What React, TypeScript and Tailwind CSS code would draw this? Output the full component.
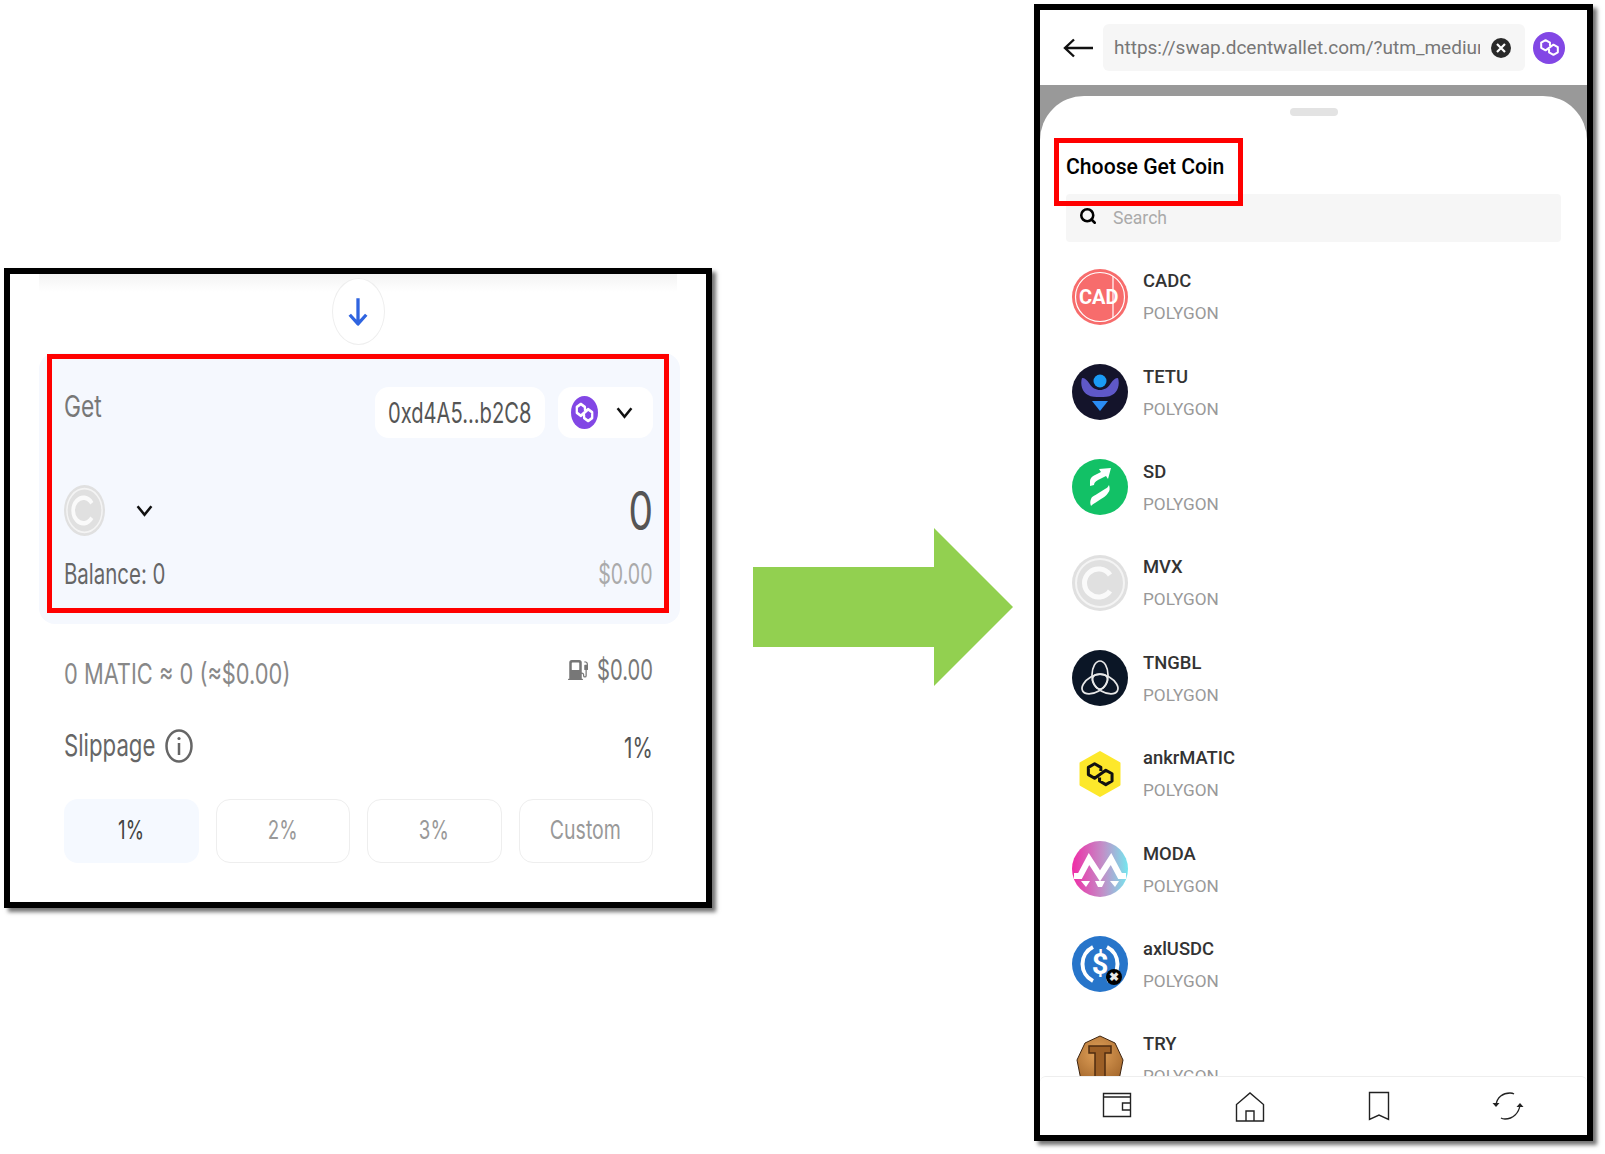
import React from 'react';
import { Search } from 'lucide-react';
import { BsFuelPumpFill } from 'react-icons/bs';

const POLYGON_PATH = 'M12.4 10V7.75L8.5 5.5 4.6 7.75v4.5l3.9 2.25 7-5 3.9 2.25v4.5l-3.9 2.25-3.9-2.25V14';

const PolygonMark: React.FC<{ color: string; width?: number; className?: string }> = ({ color, width = 2, className }) => (
  <svg viewBox="0 0 24 24" className={className} fill="none" preserveAspectRatio="none">
    <path d={POLYGON_PATH} stroke={color} strokeWidth={width} strokeLinejoin="round" strokeLinecap="round" />
  </svg>
);

const Chevron: React.FC = () => (
  <svg viewBox="0 0 16 12" className="w-[17px] h-[13px]" fill="none">
    <path d="M1.5 2l6.5 8 6.5-8" stroke="#111" strokeWidth="2.4" />
  </svg>
);

const CoinCopy: React.FC<{ className?: string }> = ({ className }) => (
  <svg viewBox="0 0 56 56" className={className} preserveAspectRatio="none">
    <circle cx="28" cy="28" r="28" fill="#e0e0e0" />
    <circle cx="28" cy="28" r="24" fill="none" stroke="#f4f4f4" strokeWidth="2" />
    <path d="M38 20a14 14 0 1 0 0 16" fill="none" stroke="#fafafa" strokeWidth="5" />
  </svg>
);

const CadcIcon = () => (
  <svg viewBox="0 0 56 56" className="w-[56px] h-[56px]">
    <circle cx="28" cy="28" r="28" fill="#f76c6c" />
    <circle cx="28" cy="28" r="24.5" fill="none" stroke="#fff" strokeWidth="1.2" />
    <path d="M41 7v42" stroke="#fff" strokeWidth="1.2" />
    <text x="7" y="35" fill="#fff" fontSize="20" fontWeight="700" fontFamily="Roboto, sans-serif">CAD</text>
  </svg>
);

const TetuIcon = () => (
  <svg viewBox="0 0 56 56" className="w-[56px] h-[56px]">
    <circle cx="28" cy="28" r="28" fill="#14142b" />
    <path d="M10 14c3 0 5 2 7 5 3 5 7 7 11 7s8-2 11-7c2-3 4-5 7-5 2 6 0 14-6 17-3 2-8 2-12 2s-9 0-12-2c-6-3-8-11-6-17z" fill="#5f58c8" />
    <circle cx="28" cy="17" r="6.5" fill="#1a9af5" />
    <path d="M20 37h16l-8 10z" fill="#2b8df5" />
  </svg>
);

const SdIcon = () => (
  <svg viewBox="0 0 56 56" className="w-[56px] h-[56px]">
    <circle cx="28" cy="28" r="28" fill="#12c166" />
    <path d="M18 23c0-3 1-5 5-7l6-3-2-3 12-1-3 11-2-3-8 4c-3 2-4 3-4 5l-4 1c0 0 0-2 0-4z" fill="#fff" />
    <path d="M19 47c-1-2-1-5 0-7 1-3 3-3 6-5l8-5c2-1 3-2 4-4 1 3 1 6-1 8-2 3-4 4-7 6l-6 4c-2 1-3 2-4 3z" fill="#fff" />
  </svg>
);

const TngblIcon = () => (
  <svg viewBox="0 0 56 56" className="w-[56px] h-[56px]">
    <circle cx="28" cy="28" r="28" fill="#0b1626" />
    <g fill="none" stroke="#e8e8e8" strokeWidth="1.7">
      <ellipse cx="28" cy="25" rx="8" ry="14" />
      <ellipse cx="28" cy="25" rx="8" ry="14" transform="rotate(120 28 31)" />
      <ellipse cx="28" cy="25" rx="8" ry="14" transform="rotate(240 28 31)" />
    </g>
  </svg>
);

const AnkrIcon = () => (
  <svg viewBox="0 0 56 56" className="w-[56px] h-[56px]">
    <path d="M28 6l19.5 11.2v21.6L28 50 8.5 38.8V17.2z" fill="#fde82b" stroke="#fde82b" strokeWidth="2" strokeLinejoin="round" />
    <g transform="translate(9 9) scale(1.6)">
      <path d={POLYGON_PATH} fill="none" stroke="#111" strokeWidth="1.9" strokeLinejoin="round" />
    </g>
  </svg>
);

const ModaIcon = () => (
  <svg viewBox="0 0 56 56" className="w-[56px] h-[56px]">
    <defs>
      <linearGradient id="modaFill" x1="0" y1="0" x2="1" y2="0">
        <stop offset="0" stopColor="#f02ca6" />
        <stop offset="0.55" stopColor="#c28fc8" />
        <stop offset="1" stopColor="#75e6ee" />
      </linearGradient>
    </defs>
    <circle cx="28" cy="28" r="28" fill="url(#modaFill)" />
    <path d="M2 35h6l9-17 11 17 11-17 9 17h6" fill="none" stroke="#fff" strokeWidth="6" strokeLinejoin="miter" />
    <path d="M9 40h9l-4 6zM23 40h10l-3 6h-4zM38 40h9l-4 6z" fill="#fff" />
  </svg>
);

const AxlIcon = () => (
  <div className="relative w-[56px] h-[56px]">
    <svg viewBox="0 0 56 56" className="w-[56px] h-[56px]">
      <circle cx="28" cy="28" r="28" fill="#2775ca" />
      <path d="M21 11a19 19 0 0 0 0 34M35 11a19 19 0 0 1 0 34" fill="none" stroke="#fff" strokeWidth="4" />
      <text x="28" y="38" textAnchor="middle" fill="#fff" fontSize="29" fontWeight="700" fontFamily="Roboto, sans-serif">$</text>
    </svg>
    <div className="absolute right-[6px] bottom-[7px] w-[16px] h-[16px] rounded-full bg-black flex items-center justify-center text-[#e8e8e8] text-[12px] leading-none font-bold">✖</div>
  </div>
);

const TryIcon = () => (
  <svg viewBox="0 0 56 56" className="w-[56px] h-[56px]">
    <defs>
      <radialGradient id="tryFill" cx="0.45" cy="0.4" r="0.7">
        <stop offset="0" stopColor="#e2a25a" />
        <stop offset="1" stopColor="#a5682c" />
      </radialGradient>
    </defs>
    <path d="M28 4l15 7 8 17-4 20H9L5 28l8-17z" fill="url(#tryFill)" stroke="#3d2410" strokeWidth="1" />
    <path d="M17 14h22v7h-6v27H23V21h-6z" fill="#9c5f26" stroke="#4f2d10" strokeWidth="1.5" />
  </svg>
);

const coins: { name: string; icon: React.ReactNode }[] = [
  { name: 'CADC', icon: <CadcIcon /> },
  { name: 'TETU', icon: <TetuIcon /> },
  { name: 'SD', icon: <SdIcon /> },
  { name: 'MVX', icon: <CoinCopy className="w-[56px] h-[56px]" /> },
  { name: 'TNGBL', icon: <TngblIcon /> },
  { name: 'ankrMATIC', icon: <AnkrIcon /> },
  { name: 'MODA', icon: <ModaIcon /> },
  { name: 'axlUSDC', icon: <AxlIcon /> },
  { name: 'TRY', icon: <TryIcon /> },
];

const SwapPanel: React.FC = () => (
  <div className="relative w-[708px] h-[640px] mt-[268px] ml-[4px] shrink-0 border-[6px] border-black bg-white shadow-[4px_4px_4px_rgba(0,0,0,0.55)] flex flex-col [font-family:Inter,sans-serif]">
    <div className="absolute top-0 left-[29px] right-[29px] h-[18px] bg-gradient-to-b from-[#f3f3f3] to-white" />
    <div className="relative mt-[4px] self-center w-[53px] h-[67px] rounded-[50%] border border-[#eeeeee] bg-white flex items-center justify-center shrink-0">
      <svg viewBox="0 0 24 34" className="w-[22px] h-[32px]" fill="none">
        <path d="M12 2v28M3 20l9 10 9-10" stroke="#2f64e0" strokeWidth="3.6" strokeLinejoin="round" />
      </svg>
    </div>

    <div className="relative mt-[8px] ml-[29px] mr-[26px] h-[271px] rounded-[16px] bg-[#f5f8fe] pt-[34px] pl-[25px] pr-[27px] shrink-0">
      <div className="absolute left-[8px] top-[1px] w-[622px] h-[259px] border-[5px] border-[#ff0000]" />
      <div className="flex justify-between items-start h-[51px]">
        <span className="mt-[1px] text-[30px] leading-[36px] text-[#777777] origin-left scale-x-[0.76]">Get</span>
        <div className="flex gap-[13px]">
          <div className="w-[170px] h-[51px] rounded-[14px] bg-white flex items-center justify-center overflow-hidden">
            <span className="text-[28px] text-[#555555] scale-x-[0.72] whitespace-nowrap">0xd4A5...b2C8</span>
          </div>
          <div className="w-[95px] h-[51px] rounded-[14px] bg-white flex items-center pl-[13px]">
            <div className="w-[27px] h-[33px] rounded-[50%] bg-[#8247e5] flex items-center justify-center">
              <PolygonMark color="#fff" width={2.2} className="w-[25px] h-[31px]" />
            </div>
            <div className="ml-[18px]"><Chevron /></div>
          </div>
        </div>
      </div>
      <div className="mt-[47px] h-[51px] flex items-center justify-between">
        <div className="flex items-center">
          <CoinCopy className="w-[41px] h-[51px]" />
          <div className="ml-[31px]"><Chevron /></div>
        </div>
        <span className="text-[54px] leading-none text-[#555555] origin-right scale-x-[0.72]">0</span>
      </div>
      <div className="mt-[23px] h-[30px] flex items-center justify-between whitespace-nowrap">
        <span className="text-[28px] text-[#666666] origin-left scale-x-[0.73]">Balance: 0</span>
        <span className="text-[28px] text-[#aaaaaa] origin-right scale-x-[0.7]">$0.00</span>
      </div>
    </div>

    <div className="ml-[54px] mr-[53px] mt-[30px] h-[32px] flex items-center justify-between whitespace-nowrap">
      <span className="mt-[8px] text-[28px] text-[#888888] origin-left scale-x-[0.78]">0 MATIC ≈ 0 (≈$0.00)</span>
      <div className="flex items-center justify-end">
        <BsFuelPumpFill className="w-[20px] h-[24px] text-[#777777] mr-[-15px]" />
        <span className="text-[28px] text-[#777777] w-[80px] text-right origin-right scale-x-[0.72]">$0.00</span>
      </div>
    </div>

    <div className="ml-[54px] mr-[53px] mt-[41px] h-[36px] flex items-center justify-between whitespace-nowrap">
      <div className="flex items-center">
        <span className="text-[30px] text-[#666666] origin-left scale-x-[0.74] w-[101px]">Slippage</span>
        <svg viewBox="0 0 28 34" className="mt-[2px] w-[28px] h-[34px]" fill="none">
          <ellipse cx="14" cy="17" rx="12.5" ry="15.5" stroke="#666" strokeWidth="2.5" />
          <path d="M14 14v12" stroke="#666" strokeWidth="2.5" />
          <circle cx="14" cy="9.5" r="1.6" fill="#666" />
        </svg>
      </div>
      <span className="mt-[5px] text-[28px] text-[#555555] origin-right scale-x-[0.74]">1%</span>
    </div>

    <div className="ml-[54px] mr-[53px] mt-[36px] h-[64px] grid grid-cols-4 gap-[17px] text-[26px]">
      <div className="rounded-[14px] bg-[#f5f9ff] flex items-center justify-center pb-[3px] text-[#444444]"><span className="scale-x-[0.72]">1%</span></div>
      <div className="rounded-[14px] border border-[#eeeeee] flex items-center justify-center pb-[3px] text-[#999999]"><span className="scale-x-[0.72]">2%</span></div>
      <div className="rounded-[14px] border border-[#eeeeee] flex items-center justify-center pb-[3px] text-[#999999]"><span className="scale-x-[0.72]">3%</span></div>
      <div className="rounded-[14px] border border-[#eeeeee] flex items-center justify-center pb-[3px] text-[#999999]"><span className="scale-x-[0.75]">Custom</span></div>
    </div>
  </div>
);

const NavIcons: React.FC = () => (
  <div className="h-[59px] shrink-0 border-t border-[#eeeeee] rounded-t-[6px] bg-white relative flex items-center">
    <svg viewBox="0 0 30 26" className="absolute left-[62px] top-[15px] w-[30px] h-[26px]" fill="none" stroke="#222" strokeWidth="1.4">
      <path d="M1.5 1.5h27v23h-27zM1.5 5h27M28.5 11h-8v7h8" />
    </svg>
    <svg viewBox="0 0 30 32" className="absolute left-[195px] top-[14px] w-[30px] h-[32px]" fill="none" stroke="#222" strokeWidth="1.4">
      <path d="M1.5 30V13.5L15 2l13.5 11.5V30zM11 30V20h8v10" />
    </svg>
    <svg viewBox="0 0 22 30" className="absolute left-[328px] top-[14px] w-[22px] h-[30px]" fill="none" stroke="#222" strokeWidth="1.4">
      <path d="M1.5 1.5h19v27L11 24 1.5 28.5z" />
    </svg>
    <svg viewBox="0 0 32 32" className="absolute left-[452px] top-[13px] w-[32px] h-[32px]" fill="none" stroke="#222" strokeWidth="1.3">
      <path d="M4 15C5 7 11 3 18 3c2 0 3 .3 4 1M28 15c-1 8-7 14-15 14-2 0-3-.3-4-1" />
      <path d="M0.5 13h7l-3.5 4zM24.5 17h7l-3.5-4z" fill="#222" stroke="none" />
    </svg>
  </div>
);

const CoinSheet: React.FC = () => (
  <div className="relative w-[559px] h-[1137px] mt-[4px] shrink-0 border-[6px] border-black bg-white shadow-[4px_4px_4px_rgba(0,0,0,0.55)] flex flex-col [font-family:Roboto,sans-serif]">
    <div className="h-[75px] shrink-0 flex items-center pl-[23px]">
      <svg viewBox="0 0 30 20" className="w-[30px] h-[20px]" fill="none">
        <path d="M30 10H2M11 1.5L2 10l9 8.5" stroke="#111" strokeWidth="2.4" />
      </svg>
      <div className="ml-[10px] w-[422px] h-[47px] rounded-[6px] bg-[#f6f6f6] flex items-center pl-[11px] pr-[14px]">
        <div className="w-[366px] pt-[2px] overflow-hidden whitespace-nowrap text-[19px] text-[#777777]">https://swap.dcentwallet.com/?utm_medium=referral</div>
        <svg viewBox="0 0 20 20" className="ml-[11px] w-[20px] h-[20px]" fill="none">
          <circle cx="10" cy="10" r="10" fill="#2a2a2a" />
          <path d="M6 6l8 8M14 6l-8 8" stroke="#fff" strokeWidth="2.2" />
        </svg>
      </div>
      <div className="ml-[8px] w-[32px] h-[32px] rounded-full bg-[#8247e5] flex items-center justify-center">
        <PolygonMark color="#fff" width={1.8} className="w-[27px] h-[27px]" />
      </div>
    </div>

    <div className="flex-1 min-h-0 bg-[#999999] pt-[11px] flex flex-col">
      <div className="relative flex-1 min-h-0 bg-white rounded-t-[44px] flex flex-col overflow-hidden">
        <div className="absolute left-[14px] top-[42px] w-[189px] h-[68px] border-[5px] border-[#ff0000]" />
        <div className="mt-[12px] self-center w-[48px] h-[8px] rounded-full bg-[#e3e3e3] shrink-0" />
        <div className="mt-[37px] ml-[26px] h-[28px] shrink-0 text-[21.2px] leading-[28px] font-medium text-black">Choose Get Coin</div>
        <div className="mt-[13px] mx-[26px] h-[48px] shrink-0 rounded-[4px] bg-[#f6f6f6] flex items-start">
          <Search className="mt-[13px] ml-[13px] w-[18px] h-[18px] text-black" strokeWidth={3.4} />
          <span className="mt-[13px] ml-[16px] text-[17.6px] leading-[22px] text-[#aaaaaa]">Search</span>
        </div>
        <div className="flex-1 min-h-0 overflow-hidden pt-[7px]">
          {coins.map((coin) => (
            <div key={coin.name} className="h-[95.4px] pl-[32px] flex items-center gap-[15px]">
              <div className="w-[56px] h-[56px] shrink-0">{coin.icon}</div>
              <div className="flex flex-col pt-[1px]">
                <span className="text-[18.4px] leading-[24px] font-medium text-[#333333]">{coin.name}</span>
                <span className="mt-[8px] text-[17.2px] leading-[24px] text-[#999999]">POLYGON</span>
              </div>
            </div>
          ))}
        </div>
        <NavIcons />
      </div>
    </div>
  </div>
);

export default function App() {
  return (
    <div className="w-[1605px] h-[1154px] bg-white flex items-start overflow-hidden">
      <SwapPanel />
      <svg viewBox="0 0 260 158" className="mt-[528px] ml-[41px] w-[260px] h-[158px] shrink-0">
        <path d="M0 39h181V0l79 79-79 79v-39H0z" fill="#92d050" />
      </svg>
      <div className="ml-[21px]"><CoinSheet /></div>
    </div>
  );
}
